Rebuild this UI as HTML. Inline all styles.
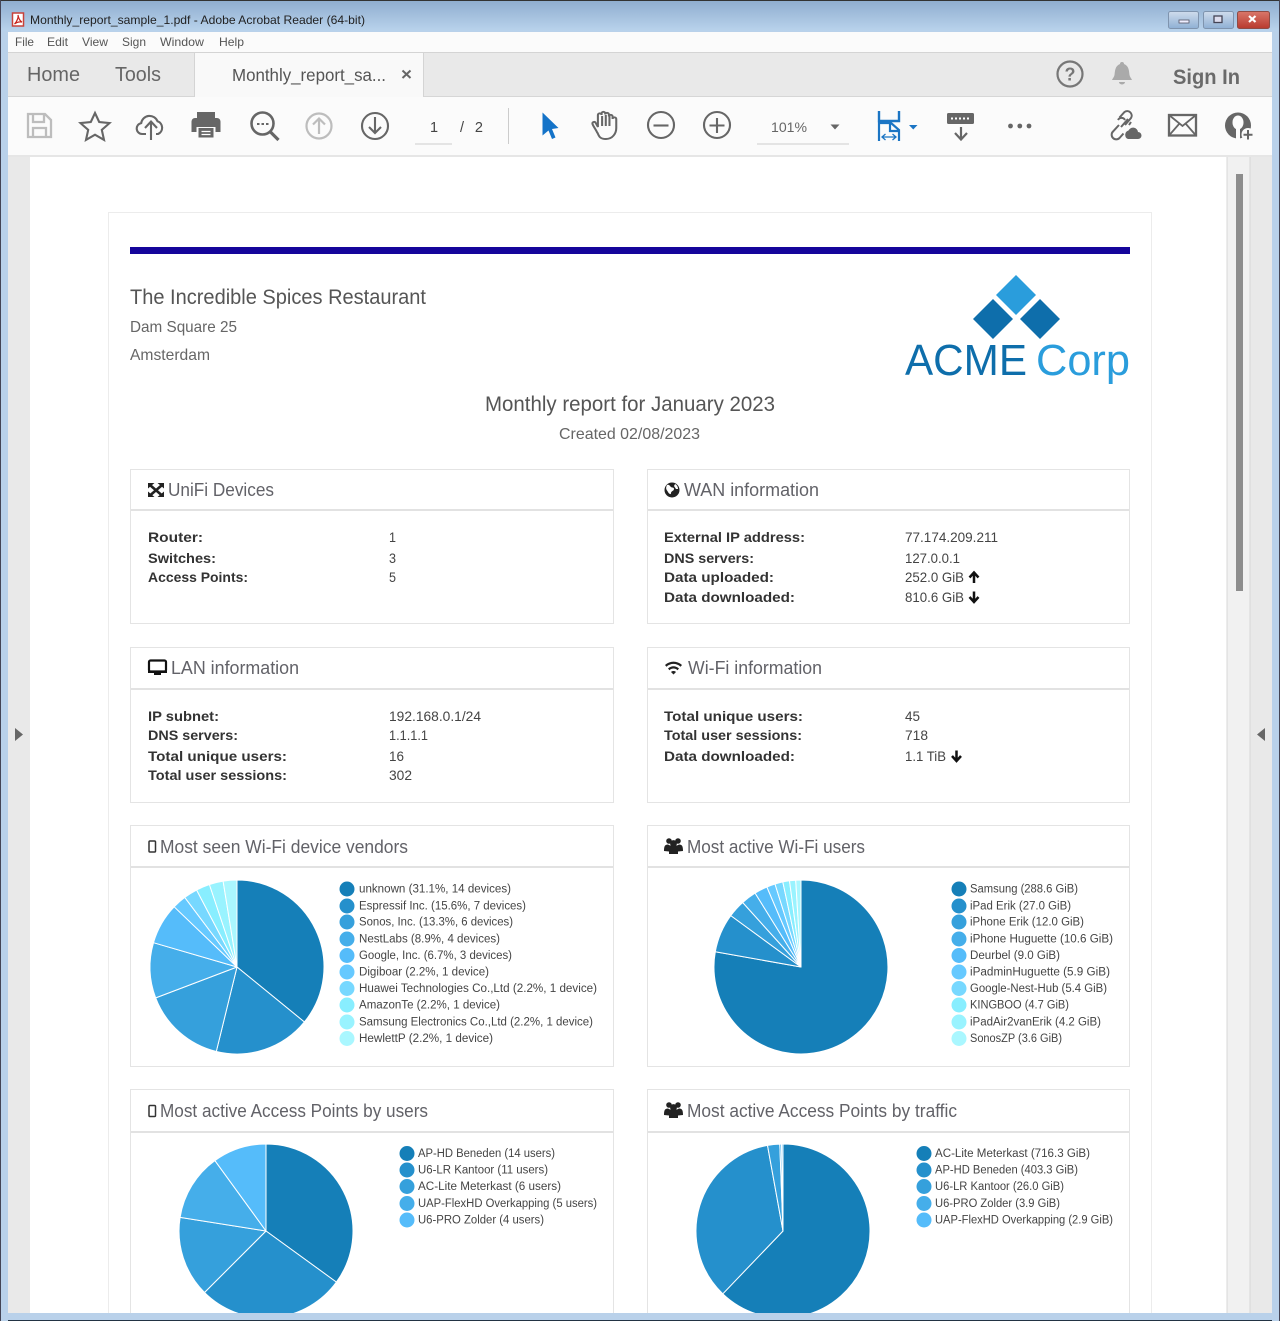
<!DOCTYPE html>
<html><head><meta charset="utf-8"><title>Monthly report</title>
<style>
html,body{margin:0;padding:0;background:#b9d1ea;width:1280px;height:1321px;overflow:hidden}
svg{display:block;filter:blur(.35px)}
text{font-family:"Liberation Sans",sans-serif}
.h{font-size:18px;fill:#626268}
.b{font-size:14px;font-weight:bold;fill:#333}
.v{font-size:14px;fill:#444}
.l{font-size:11.5px;fill:#444}
.m{font-size:12px;fill:#555}
.card{fill:#fff;stroke:#e4e4e4;stroke-width:1}
.div{stroke:#e2e2e2;stroke-width:2}
.ic{fill:none;stroke:#666;stroke-width:2.100}
path.s{stroke:#fff;stroke-width:1;stroke-linejoin:round}
</style></head><body>
<svg width="1280" height="1321" viewBox="0 0 1280 1321" xmlns="http://www.w3.org/2000/svg">
<defs>
<linearGradient id="tb" x1="0" y1="0" x2="0" y2="1"><stop offset="0" stop-color="#8fadcf"/><stop offset="1" stop-color="#b9d3ec"/></linearGradient>
<linearGradient id="bt" x1="0" y1="0" x2="0" y2="1"><stop offset="0" stop-color="#cfdcec"/><stop offset="1" stop-color="#8fb0d4"/></linearGradient>
<linearGradient id="rd" x1="0" y1="0" x2="0" y2="1"><stop offset="0" stop-color="#d9776a"/><stop offset="1" stop-color="#b83a2e"/></linearGradient>
</defs>
<!-- window frame -->
<rect width="1280" height="1321" fill="#b9d1ea"/>
<rect width="1280" height="31" fill="url(#tb)"/>
<rect x="0" y="0" width="1280" height="1" fill="#333"/>
<!-- menu, tabs, toolbar -->
<rect x="8" y="32" width="1264" height="20" fill="#fbfbfb"/>
<rect x="8" y="52" width="1264" height="1.500" fill="#d4d4d4"/>
<rect x="8" y="53" width="1264" height="44" fill="#e9e9e9"/>
<rect x="8" y="96" width="1264" height="1.500" fill="#d6d6d6"/>
<rect x="8" y="97" width="1264" height="59" fill="#fbfbfb"/>
<rect x="8" y="155" width="1264" height="2" fill="#e6e6e6"/>
<rect x="195" y="53" width="228" height="44" fill="#f9f9f9"/>
<path d="M194.500 53V97M423.500 53V97" stroke="#d4d4d4" fill="none"/>
<!-- content panes -->
<rect x="8" y="157" width="22" height="1156" fill="#e9e9e9"/>
<rect x="30" y="157" width="1197" height="1156" fill="#fff"/>
<rect x="1227" y="157" width="23" height="1156" fill="#f1f1f1"/>
<rect x="1250" y="157" width="22" height="1156" fill="#e9e9e9"/>
<path d="M1227 157V1313M1250 157V1313" stroke="#d8d8d8" fill="none"/>
<rect x="1236" y="174" width="7" height="417" fill="#8d8d8d"/>
<path d="M15 728l8 6.500-8 6.500z" fill="#666"/>
<path d="M1265 728l-8 6.500 8 6.500z" fill="#666"/>
<!-- title bar -->
<rect x="12.500" y="13" width="11" height="13" fill="#fff" stroke="#c8423a" stroke-width="1.500"/>
<path d="M14.500 24c3-3 4-7 3.500-9 .5 3 2 6 4 7-3-.5-5 0-7.500 2z" fill="none" stroke="#c8231c" stroke-width="1.200"/>
<text x="30" y="24" font-size="12" fill="#222" textLength="335" lengthAdjust="spacingAndGlyphs">Monthly_report_sample_1.pdf - Adobe Acrobat Reader (64-bit)</text>
<rect x="1168.500" y="11.500" width="30" height="17" rx="2" fill="url(#bt)" stroke="#7f94ae"/>
<rect x="1179" y="20" width="10" height="3" fill="#eef" stroke="#556"  stroke-width=".8"/>
<rect x="1203.500" y="11.500" width="30" height="17" rx="2" fill="url(#bt)" stroke="#7f94ae"/>
<rect x="1214" y="16" width="8" height="6.500" fill="#dde" stroke="#445" stroke-width="1.300"/>
<rect x="1237.500" y="11.500" width="32" height="17" rx="2" fill="url(#rd)" stroke="#8f4b44"/>
<path d="M1249 16l6.500 6M1255.500 16l-6.500 6" stroke="#fff" stroke-width="2.200"/>
<!-- menu text -->
<text class="m" x="15" y="46" textLength="19" lengthAdjust="spacingAndGlyphs">File</text>
<text class="m" x="47" y="46" textLength="21" lengthAdjust="spacingAndGlyphs">Edit</text>
<text class="m" x="82" y="46" textLength="26" lengthAdjust="spacingAndGlyphs">View</text>
<text class="m" x="122" y="46" textLength="24" lengthAdjust="spacingAndGlyphs">Sign</text>
<text class="m" x="160" y="46" textLength="44" lengthAdjust="spacingAndGlyphs">Window</text>
<text class="m" x="219" y="46" textLength="25" lengthAdjust="spacingAndGlyphs">Help</text>
<!-- tabs text -->
<text x="27" y="81" font-size="20" fill="#666" textLength="53" lengthAdjust="spacingAndGlyphs">Home</text>
<text x="115" y="81" font-size="20" fill="#666" textLength="46" lengthAdjust="spacingAndGlyphs">Tools</text>
<text x="232" y="81" font-size="17.500" fill="#555" textLength="154" lengthAdjust="spacingAndGlyphs">Monthly_report_sa...</text>
<path d="M402.500 70.500l8 7.500M410.500 70.500l-8 7.500" stroke="#666" stroke-width="2"/>
<circle cx="1070" cy="74" r="12.500" fill="none" stroke="#777" stroke-width="2.200"/>
<text x="1070" y="80.500" font-size="18" font-weight="bold" fill="#777" text-anchor="middle">?</text>
<path d="M1122 62a2 2 0 0 1 2 2c5 2 5 7 5.500 11 .3 2 2 3.500 2.500 5h-20c.5-1.500 2.200-3 2.500-5 .5-4 .5-9 5.500-11a2 2 0 0 1 2-2zM1119 82h6a3 2.500 0 0 1-6 0z" fill="#aaa"/>
<text x="1173" y="84" font-size="21" font-weight="bold" fill="#6a6a6a" textLength="67" lengthAdjust="spacingAndGlyphs">Sign In</text>
<!-- toolbar icons -->
<path d="M28 114h17l6 6v17H28z M33 114v8h11v-8 M33 137v-9h13v9" fill="none" stroke="#bdbdbd" stroke-width="2.300"/>
<path d="M95 113l4.200 9 10.300 1.100-7.700 6.800 2.200 10-9-5.200-9 5.200 2.200-10-7.700-6.800 10.300-1.100z" class="ic"/>
<path d="M146 134h-4a5.500 5.500 0 0 1-.8-10.900 8.500 8.500 0 0 1 16.300-1.800 6.800 6.800 0 0 1 .5 12.700h-2" class="ic"/>
<path d="M151 140v-18M145 128l6-6.500 6 6.500" class="ic"/>
<path d="M197 112h18v7h-18z" fill="#666"/>
<path d="M195 118h22a3.500 3.500 0 0 1 3.500 3.500V132h-5v-5h-19v5h-5v-10.500a3.500 3.500 0 0 1 3.500-3.500z" fill="#666"/>
<rect x="198.500" y="128" width="15" height="9.500" fill="#666"/>
<path d="M201.500 131.500h9M201.500 134.500h9" stroke="#fff" stroke-width="1.200"/>
<circle cx="262.500" cy="123.500" r="11" fill="none" stroke="#666" stroke-width="2.600"/>
<path d="M270.500 132l8 8" stroke="#666" stroke-width="3.200"/>
<path d="M257 124h2.500M261.500 124h2.500M266 124h2.500" stroke="#666" stroke-width="2"/>
<circle cx="319" cy="126" r="12.500" fill="none" stroke="#bdbdbd" stroke-width="2.200"/>
<path d="M319 134v-15M313 124.500l6-6 6 6" fill="none" stroke="#bdbdbd" stroke-width="2.200"/>
<circle cx="375" cy="126" r="13" class="ic"/>
<path d="M375 117v15.500M369 127l6 6 6-6" class="ic"/>
<text x="430" y="132" font-size="14.500" fill="#444">1</text>
<text x="460" y="132" font-size="14.500" fill="#444" textLength="23" lengthAdjust="spacing">/ 2</text>
<rect x="415" y="143.500" width="37" height="1" fill="#ccc"/>
<rect x="508" y="108" width="1" height="36" fill="#ccc"/>
<path d="M542.500 112.500l16 15.500-6.500 1 3.500 8.500-3.500 1.500-3.500-8.500-6 5z" fill="#1473c8"/>
<path transform="translate(-47.400 1) scale(1.080 1)" d="M597 132c-1-3-4-7-4.500-9-.4-2 2-3 3-1l2 4v-12a1.700 1.700 0 0 1 3.400 0v-1.500a1.700 1.700 0 0 1 3.400 0v1a1.700 1.700 0 0 1 3.400 0v2a1.700 1.700 0 0 1 3.400 0v2.500a1.700 1.700 0 0 1 3.400 0v9c0 5.500-3.500 11-9.500 11s-6.500-3-8-6.500zM601.400 125v-10M604.800 125v-11M608.200 125v-10" fill="none" stroke="#666" stroke-width="1.900"/>
<circle cx="661" cy="125" r="13" class="ic"/><path d="M653.500 125.500h15" class="ic"/>
<circle cx="717" cy="125" r="13" class="ic"/><path d="M709.500 125.500h15M717 118v15" class="ic"/>
<text x="771" y="132" font-size="14" fill="#666" textLength="36" lengthAdjust="spacingAndGlyphs">101%</text>
<path d="M830.500 124.500h9l-4.500 5z" fill="#666"/>
<rect x="757" y="143.500" width="92" height="1" fill="#ccc"/>
<path d="M879 111v10h20v-10" fill="none" stroke="#1b75c4" stroke-width="2.400"/>
<path d="M879 141v-18h12l8 7v11M890 124v7h8" fill="none" stroke="#1b75c4" stroke-width="2.200"/>
<path d="M882 137h14M885.500 134l-3.500 3 3.500 3M892.500 134l3.500 3-3.500 3" fill="none" stroke="#1b75c4" stroke-width="1.300"/>
<path d="M909 125h8.500l-4.250 4.500z" fill="#1b75c4"/>
<rect x="947" y="113" width="27" height="11" rx="1.500" fill="#666"/>
<path d="M951 118.500h2M955 118.500h2M959 118.500h2M963 118.500h2M967 118.500h2" stroke="#fff" stroke-width="2"/>
<path d="M961 127v12M955 133l6 6.500 6-6.500" fill="none" stroke="#666" stroke-width="2.200"/>
<circle cx="1010.500" cy="126" r="2.400" fill="#666"/><circle cx="1019.800" cy="126" r="2.400" fill="#666"/><circle cx="1029" cy="126" r="2.400" fill="#666"/>
<path d="M1119 125l-6 6.500a4.500 4.500 0 0 0 6.500 6.500l4-4.500M1125 125l6-7a4.500 4.500 0 0 0-6.500-6l-5 5.500M1121 127l7-8M1118 120a4 4 0 0 1 7 0M1131 122l-2 3" fill="none" stroke="#666" stroke-width="2"/>
<path d="M1128 139h10a3.500 3.500 0 0 0 0-7 5 5 0 0 0-9.500-1.500 4.500 4.500 0 0 0-.5 8.500z" fill="#666"/>
<rect x="1169" y="115" width="27" height="20.500" fill="none" stroke="#666" stroke-width="2.300"/>
<path d="M1169 115l13.500 11 13.500-11M1169 135.500l10.500-12M1196 135.500l-10.500-12" fill="none" stroke="#666" stroke-width="1.800"/>
<circle cx="1238" cy="125.500" r="13" fill="#666"/>
<ellipse cx="1238" cy="122.500" rx="5.500" ry="7" fill="#fbfbfb"/>
<rect x="1236" y="128" width="4" height="11" fill="#fbfbfb"/>
<circle cx="1248" cy="134.500" r="6.500" fill="#fbfbfb"/>
<path d="M1248 130v9.500M1243.500 134.800h9" stroke="#666" stroke-width="2"/>
<!-- page -->
<rect x="108.500" y="212.500" width="1043" height="1120" fill="#fff" stroke="#ececec"/>
<rect x="130" y="247" width="1000" height="7" fill="#15059b"/>
<text x="130" y="304" font-size="21" fill="#555" textLength="296" lengthAdjust="spacingAndGlyphs">The Incredible Spices Restaurant</text>
<text x="130" y="332" font-size="16" fill="#666" textLength="107" lengthAdjust="spacingAndGlyphs">Dam Square 25</text>
<text x="130" y="360" font-size="16" fill="#666" textLength="80" lengthAdjust="spacingAndGlyphs">Amsterdam</text>
<text x="485" y="411" font-size="21" fill="#555" textLength="290" lengthAdjust="spacingAndGlyphs">Monthly report for January 2023</text>
<text x="559" y="439" font-size="16" fill="#666" textLength="141" lengthAdjust="spacingAndGlyphs">Created 02/08/2023</text>
<!-- logo -->
<path d="M1016 275l20 20-20 20-20-20z" fill="#2a9ddc"/>
<path d="M993 299l20 20-20 20-20-20zM1040 299l20 20-20 20-20-20z" fill="#0e6eab"/>
<text x="905" y="375" font-size="44" fill="#0e6eab" textLength="122" lengthAdjust="spacingAndGlyphs">ACME</text>
<text x="1036" y="375" font-size="44" fill="#2a9ddc" textLength="94" lengthAdjust="spacingAndGlyphs">Corp</text>
<!-- cards -->
<rect class="card" x="130.500" y="469.500" width="483" height="154"/><path class="div" d="M131 510H613"/>
<rect class="card" x="647.500" y="469.500" width="482" height="154"/><path class="div" d="M648 510H1129"/>
<rect class="card" x="130.500" y="647.500" width="483" height="155"/><path class="div" d="M131 689H613"/>
<rect class="card" x="647.500" y="647.500" width="482" height="155"/><path class="div" d="M648 689H1129"/>
<rect class="card" x="130.500" y="825.500" width="483" height="241"/><path class="div" d="M131 867H613"/>
<rect class="card" x="647.500" y="825.500" width="482" height="241"/><path class="div" d="M648 867H1129"/>
<rect class="card" x="130.500" y="1089.500" width="483" height="260"/><path class="div" d="M131 1132H613"/>
<rect class="card" x="647.500" y="1089.500" width="482" height="260"/><path class="div" d="M648 1132H1129"/>
<!-- heading icons -->
<path d="M150.500 485.500l11 9.500M161.500 485.500l-11 9.500" stroke="#222" stroke-width="2.600" fill="none"/>
<path d="M148 483h6.500l-6.500 5.500zM164 483h-6.500l6.500 5.500zM148 497h6.500l-6.500-5.500zM164 497h-6.500l6.500-5.500z" fill="#222"/>
<circle cx="672" cy="490" r="7.500" fill="#222"/>
<path d="M667 485c2-1 3 1 4 2s3 0 3 2-3 2-3 4-2 1-3-1-3-3-1-7zM675 484c2 1 3 3 3 5l-2 0-2-3z" fill="#fff"/>
<rect x="149" y="660.500" width="17" height="11" rx="1.500" fill="none" stroke="#111" stroke-width="2.200"/>
<path d="M148 671h19v2h-6v2h-7v-2h-6z" fill="#111"/>
<path d="M665 665c5-4.500 12-4.500 17 0l-1.500 1.700c-4-3.700-10-3.700-14 0zM668 668.500c3.300-3 7.700-3 11 0l-1.500 1.700c-2.500-2.200-5.500-2.200-8 0zM671 672c1.500-1.300 3.500-1.300 5 0l-2.500 2.500z" fill="#222"/>
<rect x="149" y="841" width="6.500" height="11" rx="1" fill="none" stroke="#333" stroke-width="1.500"/>
<rect x="149" y="1105.500" width="6.500" height="11" rx="1" fill="none" stroke="#333" stroke-width="1.500"/>
<g fill="#222"><circle cx="669" cy="841" r="2.800"/><circle cx="678" cy="841" r="2.800"/><circle cx="673.500" cy="843.500" r="3.400"/><path d="M664 851c0-5 1-6.500 4-6.500l2 1h7l2-1c3 0 4 1.500 4 6.500l-5 .5v2.500h-9v-2.500z"/></g>
<g fill="#222"><circle cx="669" cy="1105" r="2.800"/><circle cx="678" cy="1105" r="2.800"/><circle cx="673.500" cy="1107.500" r="3.400"/><path d="M664 1115c0-5 1-6.500 4-6.500l2 1h7l2-1c3 0 4 1.500 4 6.500l-5 .5v2.500h-9v-2.500z"/></g>
<!-- headings -->
<text class="h" x="168" y="496" textLength="106" lengthAdjust="spacingAndGlyphs">UniFi Devices</text>
<text class="h" x="684" y="496" textLength="135" lengthAdjust="spacingAndGlyphs">WAN information</text>
<text class="h" x="171" y="674" textLength="128" lengthAdjust="spacingAndGlyphs">LAN information</text>
<text class="h" x="688" y="674" textLength="134" lengthAdjust="spacingAndGlyphs">Wi-Fi information</text>
<text class="h" x="160" y="853" textLength="248" lengthAdjust="spacingAndGlyphs">Most seen Wi-Fi device vendors</text>
<text class="h" x="687" y="853" textLength="178" lengthAdjust="spacingAndGlyphs">Most active Wi-Fi users</text>
<text class="h" x="160" y="1117" textLength="268" lengthAdjust="spacingAndGlyphs">Most active Access Points by users</text>
<text class="h" x="687" y="1117" textLength="270" lengthAdjust="spacingAndGlyphs">Most active Access Points by traffic</text>
<!-- UniFi -->
<text class="b" x="148" y="542" textLength="55" lengthAdjust="spacingAndGlyphs">Router:</text>
<text class="b" x="148" y="563" textLength="68" lengthAdjust="spacingAndGlyphs">Switches:</text>
<text class="b" x="148" y="582" textLength="100" lengthAdjust="spacingAndGlyphs">Access Points:</text>
<text class="v" x="389" y="542" textLength="7" lengthAdjust="spacingAndGlyphs">1</text>
<text class="v" x="389" y="563" textLength="7" lengthAdjust="spacingAndGlyphs">3</text>
<text class="v" x="389" y="582" textLength="7" lengthAdjust="spacingAndGlyphs">5</text>
<!-- WAN -->
<text class="b" x="664" y="542" textLength="141" lengthAdjust="spacingAndGlyphs">External IP address:</text>
<text class="b" x="664" y="563" textLength="90" lengthAdjust="spacingAndGlyphs">DNS servers:</text>
<text class="b" x="664" y="582" textLength="110" lengthAdjust="spacingAndGlyphs">Data uploaded:</text>
<text class="b" x="664" y="602" textLength="131" lengthAdjust="spacingAndGlyphs">Data downloaded:</text>
<text class="v" x="905" y="542" textLength="93" lengthAdjust="spacingAndGlyphs">77.174.209.211</text>
<text class="v" x="905" y="563" textLength="55" lengthAdjust="spacingAndGlyphs">127.0.0.1</text>
<text class="v" x="905" y="582" textLength="59" lengthAdjust="spacingAndGlyphs">252.0 GiB</text>
<text class="v" x="905" y="602" textLength="59" lengthAdjust="spacingAndGlyphs">810.6 GiB</text>
<path d="M974 583v-9M969.500 577.500l4.500-5 4.500 5" fill="none" stroke="#111" stroke-width="2.500"/>
<path d="M974 591.500v9M969.500 597l4.500 5 4.500-5" fill="none" stroke="#111" stroke-width="2.500"/>
<!-- LAN -->
<text class="b" x="148" y="721" textLength="71" lengthAdjust="spacingAndGlyphs">IP subnet:</text>
<text class="b" x="148" y="740" textLength="90" lengthAdjust="spacingAndGlyphs">DNS servers:</text>
<text class="b" x="148" y="761" textLength="139" lengthAdjust="spacingAndGlyphs">Total unique users:</text>
<text class="b" x="148" y="780" textLength="139" lengthAdjust="spacingAndGlyphs">Total user sessions:</text>
<text class="v" x="389" y="721" textLength="92" lengthAdjust="spacingAndGlyphs">192.168.0.1/24</text>
<text class="v" x="389" y="740" textLength="39" lengthAdjust="spacingAndGlyphs">1.1.1.1</text>
<text class="v" x="389" y="761" textLength="15" lengthAdjust="spacingAndGlyphs">16</text>
<text class="v" x="389" y="780" textLength="23" lengthAdjust="spacingAndGlyphs">302</text>
<!-- Wi-Fi -->
<text class="b" x="664" y="721" textLength="139" lengthAdjust="spacingAndGlyphs">Total unique users:</text>
<text class="b" x="664" y="740" textLength="138" lengthAdjust="spacingAndGlyphs">Total user sessions:</text>
<text class="b" x="664" y="761" textLength="131" lengthAdjust="spacingAndGlyphs">Data downloaded:</text>
<text class="v" x="905" y="721" textLength="15" lengthAdjust="spacingAndGlyphs">45</text>
<text class="v" x="905" y="740" textLength="23" lengthAdjust="spacingAndGlyphs">718</text>
<text class="v" x="905" y="761" textLength="41" lengthAdjust="spacingAndGlyphs">1.1 TiB</text>
<path d="M956.500 750.500v9M952 756l4.500 5 4.500-5" fill="none" stroke="#111" stroke-width="2.500"/>
<!-- pie 1 -->
<g class="pie">
<path class="s" fill="#157fb8" d="M237 967V880A87 87 0 0 1 304.400 1022z"/>
<path class="s" fill="#2590cc" d="M237 967L304.400 1022A87 87 0 0 1 216.300 1051.500z"/>
<path class="s" fill="#35a0dc" d="M237 967L216.300 1051.500A87 87 0 0 1 155.700 997.900z"/>
<path class="s" fill="#45aeea" d="M237 967L155.700 997.900A87 87 0 0 1 153.500 942.700z"/>
<path class="s" fill="#55bcfa" d="M237 967L153.500 942.700A87 87 0 0 1 174.200 906.800z"/>
<path class="s" fill="#66c9ff" d="M237 967L174.200 906.800A87 87 0 0 1 184.800 897.400z"/>
<path class="s" fill="#77d8ff" d="M237 967L184.800 897.400A87 87 0 0 1 196.600 890z"/>
<path class="s" fill="#88eeff" d="M237 967L196.600 890A87 87 0 0 1 209.400 884.500z"/>
<path class="s" fill="#99f3ff" d="M237 967L209.400 884.500A87 87 0 0 1 223.100 881.100z"/>
<path class="s" fill="#aaf7ff" d="M237 967L223.100 881.100A87 87 0 0 1 237 880z"/>
</g>
<!-- pie 2 -->
<g>
<path class="s" fill="#157fb8" d="M801 967V880A87 87 0 1 1 715.300 951.800z"/>
<path class="s" fill="#2590cc" d="M801 967L715.300 951.800A87 87 0 0 1 730.800 915.600z"/>
<path class="s" fill="#35a0dc" d="M801 967L730.800 915.600A87 87 0 0 1 742.700 902.500z"/>
<path class="s" fill="#45aeea" d="M801 967L742.700 902.500A87 87 0 0 1 755.100 893.100z"/>
<path class="s" fill="#55bcfa" d="M801 967L755.100 893.100A87 87 0 0 1 766.900 887z"/>
<path class="s" fill="#66c9ff" d="M801 967L766.900 887A87 87 0 0 1 775 884z"/>
<path class="s" fill="#77d8ff" d="M801 967L775 884A87 87 0 0 1 782.800 881.900z"/>
<path class="s" fill="#88eeff" d="M801 967L782.800 881.900A87 87 0 0 1 789.500 880.800z"/>
<path class="s" fill="#99f3ff" d="M801 967L789.500 880.800A87 87 0 0 1 795.700 880.200z"/>
<path class="s" fill="#aaf7ff" d="M801 967L795.700 880.200A87 87 0 0 1 801 880z"/>
</g>
<!-- pie 3 -->
<g>
<path class="s" fill="#157fb8" d="M266 1231V1144A87 87 0 0 1 336.400 1282.100z"/>
<path class="s" fill="#2590cc" d="M266 1231L336.400 1282.100A87 87 0 0 1 204.500 1292.500z"/>
<path class="s" fill="#35a0dc" d="M266 1231L204.500 1292.500A87 87 0 0 1 180.100 1217.400z"/>
<path class="s" fill="#45aeea" d="M266 1231L180.100 1217.400A87 87 0 0 1 214.900 1160.600z"/>
<path class="s" fill="#55bcfa" d="M266 1231L214.900 1160.600A87 87 0 0 1 266 1144z"/>
</g>
<!-- pie 4 -->
<g>
<path class="s" fill="#157fb8" d="M783 1231V1144A87 87 0 1 1 722.800 1293.800z"/>
<path class="s" fill="#2590cc" d="M783 1231L722.800 1293.800A87 87 0 0 1 767.500 1145.400z"/>
<path class="s" fill="#35a0dc" d="M783 1231L767.500 1145.400A87 87 0 0 1 779.800 1144.100z"/>
<path class="s" fill="#45aeea" d="M783 1231L779.800 1144.100A87 87 0 0 1 781.600 1144z"/>
<path class="s" fill="#55bcfa" d="M783 1231L781.600 1144A87 87 0 0 1 783 1144z"/>
</g>
<!-- legend 1 -->
<circle cx="347" cy="889" r="7.500" fill="#157fb8"/><text class="l" x="359" y="892.500" textLength="152" lengthAdjust="spacingAndGlyphs">unknown (31.1%, 14 devices)</text>
<circle cx="347" cy="906" r="7.500" fill="#2590cc"/><text class="l" x="359" y="909.500" textLength="167" lengthAdjust="spacingAndGlyphs">Espressif Inc. (15.6%, 7 devices)</text>
<circle cx="347" cy="922" r="7.500" fill="#35a0dc"/><text class="l" x="359" y="925.500" textLength="154" lengthAdjust="spacingAndGlyphs">Sonos, Inc. (13.3%, 6 devices)</text>
<circle cx="347" cy="939" r="7.500" fill="#45aeea"/><text class="l" x="359" y="942.500" textLength="141" lengthAdjust="spacingAndGlyphs">NestLabs (8.9%, 4 devices)</text>
<circle cx="347" cy="955.500" r="7.500" fill="#55bcfa"/><text class="l" x="359" y="959" textLength="153" lengthAdjust="spacingAndGlyphs">Google, Inc. (6.7%, 3 devices)</text>
<circle cx="347" cy="972" r="7.500" fill="#66c9ff"/><text class="l" x="359" y="975.500" textLength="130" lengthAdjust="spacingAndGlyphs">Digiboar (2.2%, 1 device)</text>
<circle cx="347" cy="988.500" r="7.500" fill="#77d8ff"/><text class="l" x="359" y="992" textLength="238" lengthAdjust="spacingAndGlyphs">Huawei Technologies Co.,Ltd (2.2%, 1 device)</text>
<circle cx="347" cy="1005" r="7.500" fill="#88eeff"/><text class="l" x="359" y="1008.500" textLength="141" lengthAdjust="spacingAndGlyphs">AmazonTe (2.2%, 1 device)</text>
<circle cx="347" cy="1022" r="7.500" fill="#99f3ff"/><text class="l" x="359" y="1025.500" textLength="234" lengthAdjust="spacingAndGlyphs">Samsung Electronics Co.,Ltd (2.2%, 1 device)</text>
<circle cx="347" cy="1038.500" r="7.500" fill="#aaf7ff"/><text class="l" x="359" y="1042" textLength="134" lengthAdjust="spacingAndGlyphs">HewlettP (2.2%, 1 device)</text>
<!-- legend 2 -->
<circle cx="959" cy="889" r="7.500" fill="#157fb8"/><text class="l" x="970" y="892.500" textLength="108" lengthAdjust="spacingAndGlyphs">Samsung (288.6 GiB)</text>
<circle cx="959" cy="906" r="7.500" fill="#2590cc"/><text class="l" x="970" y="909.500" textLength="101" lengthAdjust="spacingAndGlyphs">iPad Erik (27.0 GiB)</text>
<circle cx="959" cy="922" r="7.500" fill="#35a0dc"/><text class="l" x="970" y="925.500" textLength="114" lengthAdjust="spacingAndGlyphs">iPhone Erik (12.0 GiB)</text>
<circle cx="959" cy="939" r="7.500" fill="#45aeea"/><text class="l" x="970" y="942.500" textLength="143" lengthAdjust="spacingAndGlyphs">iPhone Huguette (10.6 GiB)</text>
<circle cx="959" cy="955.500" r="7.500" fill="#55bcfa"/><text class="l" x="970" y="959" textLength="90" lengthAdjust="spacingAndGlyphs">Deurbel (9.0 GiB)</text>
<circle cx="959" cy="972" r="7.500" fill="#66c9ff"/><text class="l" x="970" y="975.500" textLength="140" lengthAdjust="spacingAndGlyphs">iPadminHuguette (5.9 GiB)</text>
<circle cx="959" cy="988.500" r="7.500" fill="#77d8ff"/><text class="l" x="970" y="992" textLength="137" lengthAdjust="spacingAndGlyphs">Google-Nest-Hub (5.4 GiB)</text>
<circle cx="959" cy="1005" r="7.500" fill="#88eeff"/><text class="l" x="970" y="1008.500" textLength="99" lengthAdjust="spacingAndGlyphs">KINGBOO (4.7 GiB)</text>
<circle cx="959" cy="1022" r="7.500" fill="#99f3ff"/><text class="l" x="970" y="1025.500" textLength="131" lengthAdjust="spacingAndGlyphs">iPadAir2vanErik (4.2 GiB)</text>
<circle cx="959" cy="1038.500" r="7.500" fill="#aaf7ff"/><text class="l" x="970" y="1042" textLength="92" lengthAdjust="spacingAndGlyphs">SonosZP (3.6 GiB)</text>
<!-- legend 3 -->
<circle cx="407" cy="1153.500" r="7.500" fill="#157fb8"/><text class="l" x="418" y="1157" textLength="137" lengthAdjust="spacingAndGlyphs">AP-HD Beneden (14 users)</text>
<circle cx="407" cy="1170" r="7.500" fill="#2590cc"/><text class="l" x="418" y="1173.500" textLength="130" lengthAdjust="spacingAndGlyphs">U6-LR Kantoor (11 users)</text>
<circle cx="407" cy="1186.500" r="7.500" fill="#35a0dc"/><text class="l" x="418" y="1190" textLength="143" lengthAdjust="spacingAndGlyphs">AC-Lite Meterkast (6 users)</text>
<circle cx="407" cy="1203.500" r="7.500" fill="#45aeea"/><text class="l" x="418" y="1207" textLength="179" lengthAdjust="spacingAndGlyphs">UAP-FlexHD Overkapping (5 users)</text>
<circle cx="407" cy="1220" r="7.500" fill="#55bcfa"/><text class="l" x="418" y="1223.500" textLength="126" lengthAdjust="spacingAndGlyphs">U6-PRO Zolder (4 users)</text>
<!-- legend 4 -->
<circle cx="924" cy="1153.500" r="7.500" fill="#157fb8"/><text class="l" x="935" y="1157" textLength="155" lengthAdjust="spacingAndGlyphs">AC-Lite Meterkast (716.3 GiB)</text>
<circle cx="924" cy="1170" r="7.500" fill="#2590cc"/><text class="l" x="935" y="1173.500" textLength="143" lengthAdjust="spacingAndGlyphs">AP-HD Beneden (403.3 GiB)</text>
<circle cx="924" cy="1186.500" r="7.500" fill="#35a0dc"/><text class="l" x="935" y="1190" textLength="129" lengthAdjust="spacingAndGlyphs">U6-LR Kantoor (26.0 GiB)</text>
<circle cx="924" cy="1203.500" r="7.500" fill="#45aeea"/><text class="l" x="935" y="1207" textLength="125" lengthAdjust="spacingAndGlyphs">U6-PRO Zolder (3.9 GiB)</text>
<circle cx="924" cy="1220" r="7.500" fill="#55bcfa"/><text class="l" x="935" y="1223.500" textLength="178" lengthAdjust="spacingAndGlyphs">UAP-FlexHD Overkapping (2.9 GiB)</text>
<!-- bottom frame over content -->
<rect x="0" y="1313" width="1280" height="8" fill="#b9d1ea"/>
<rect x="0" y="1320" width="1280" height="1" fill="#234"/>
<rect x="0" y="31" width="8" height="1290" fill="#b9d1ea"/>
<rect x="1272" y="31" width="8" height="1290" fill="#b9d1ea"/>
<rect x="0" y="0" width="1" height="1321" fill="#445"/>
<rect x="1279" y="0" width="1" height="1321" fill="#445"/>
</svg>
</body></html>
